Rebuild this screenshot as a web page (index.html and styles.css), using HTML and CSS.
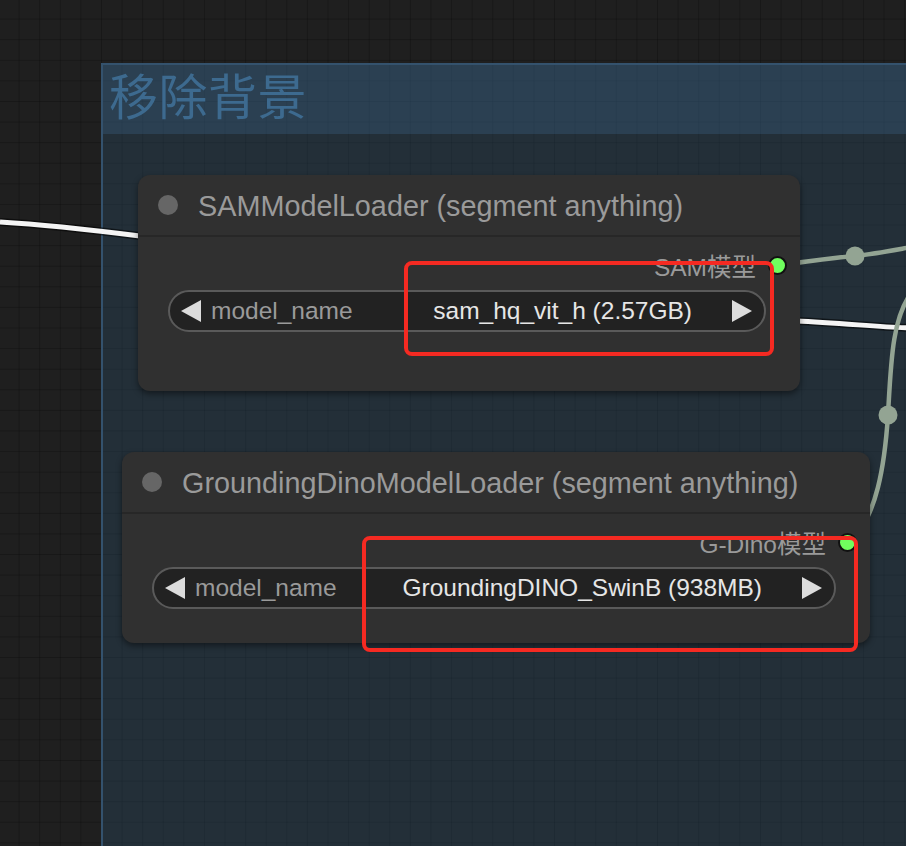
FILE: index.html
```html
<!DOCTYPE html>
<html lang="zh">
<head>
<meta charset="utf-8">
<title>ComfyUI - 移除背景</title>
<link rel="stylesheet" href="styles.css">
</head>
<body>
<div class="canvas">
  <div class="group">
    <div class="group-title">移除背景</div>
    <div class="group-body"></div>
  </div>

  <svg class="links" width="906" height="846" viewBox="0 0 906 846">
    <path class="link-shadow" d="M0 222 C 50 225, 100 231, 140 236"/>
    <path class="link-white" d="M0 222 C 50 225, 100 231, 140 236"/>
    <path class="link-shadow" d="M796 321 C 840 323, 880 327, 910 328"/>
    <path class="link-white" d="M796 321 C 840 323, 880 327, 910 328"/>
    <path class="link-sage" d="M779 265 C 805 262, 830 258, 855 256 C 875 254, 895 250, 912 247"/>
    <path class="link-sage" d="M846 546 C 878 520, 885 460, 888 415 C 891 362, 892 318, 912 292"/>
    <circle class="link-dot" cx="855" cy="256" r="9.5"/>
    <circle class="link-dot" cx="888" cy="415" r="9.5"/>
  </svg>

  <div class="node node-sam">
    <div class="node-header">
      <span class="node-dot"></span>
      <span class="node-title">SAMModelLoader (segment anything)</span>
    </div>
    <div class="node-body">
      <div class="output-row">
        <span class="output-label">SAM模型</span>
        <span class="slot"></span>
      </div>
      <div class="combo">
        <svg class="arrow" width="20" height="22" viewBox="0 0 20 22"><polygon points="20,0 20,22 0,11"/></svg>
        <span class="combo-label">model_name</span>
        <span class="combo-value">sam_hq_vit_h (2.57GB)</span>
        <svg class="arrow" width="20" height="22" viewBox="0 0 20 22"><polygon points="0,0 0,22 20,11"/></svg>
      </div>
    </div>
  </div>

  <div class="node node-dino">
    <div class="node-header">
      <span class="node-dot"></span>
      <span class="node-title">GroundingDinoModelLoader (segment anything)</span>
    </div>
    <div class="node-body">
      <div class="output-row">
        <span class="output-label">G-Dino模型</span>
        <span class="slot"></span>
      </div>
      <div class="combo">
        <svg class="arrow" width="20" height="22" viewBox="0 0 20 22"><polygon points="20,0 20,22 0,11"/></svg>
        <span class="combo-label">model_name</span>
        <span class="combo-value">GroundingDINO_SwinB (938MB)</span>
        <svg class="arrow" width="20" height="22" viewBox="0 0 20 22"><polygon points="0,0 0,22 20,11"/></svg>
      </div>
    </div>
  </div>

  <div class="mark mark-sam"></div>
  <div class="mark mark-dino"></div>
</div>
</body>
</html>
```

FILE: styles.css
```css
html, body {
  margin: 0;
  padding: 0;
  width: 906px;
  height: 846px;
  overflow: hidden;
}

body {
  font-family: "Liberation Sans", Arial, "Noto Sans CJK SC", sans-serif;
  background-color: #1f1f1f;
  background-image:
    linear-gradient(to right, rgba(0, 0, 0, 0.22) 1px, transparent 1px),
    linear-gradient(to bottom, rgba(0, 0, 0, 0.22) 1px, transparent 1px);
  background-size: 20.6px 20.6px;
  background-position: -2px -2px;
}

.canvas {
  position: relative;
  width: 906px;
  height: 846px;
}

/* group frame */
.group {
  position: absolute;
  left: 101px;
  top: 63px;
  width: 840px;
  height: 820px;
  display: flex;
  flex-direction: column;
  border-left: 2px solid #34526d;
  border-top: 2px solid #34526d;
}

.group-title {
  height: 69px;
  flex: none;
  background: rgba(56, 100, 138, 0.48);
  color: #3d6a8f;
  font-family: "Noto Sans CJK SC", "Liberation Sans", sans-serif;
  font-size: 49px;
  line-height: 58px;
  padding-left: 6px;
  letter-spacing: 0.5px;
}

.group-body {
  flex: 1;
  background: rgba(47, 87, 117, 0.3);
}

/* links */
.links {
  position: absolute;
  left: 0;
  top: 0;
  overflow: visible;
}

.link-shadow {
  fill: none;
  stroke: rgba(0, 0, 0, 0.55);
  stroke-width: 8;
}

.link-white {
  fill: none;
  stroke: #f4f4f4;
  stroke-width: 5;
}

.link-sage {
  fill: none;
  stroke: #93a493;
  stroke-width: 4.5;
}

.link-dot {
  fill: #93a493;
}

/* nodes */
.node {
  position: absolute;
  background: #303030;
  border-radius: 12px;
  box-shadow: 0 3px 6px rgba(0, 0, 0, 0.45);
  display: flex;
  flex-direction: column;
}

.node-sam {
  left: 138px;
  top: 175px;
  width: 662px;
  height: 216px;
}

.node-dino {
  left: 122px;
  top: 452px;
  width: 748px;
  height: 191px;
}

.node-header {
  height: 60px;
  flex: none;
  display: flex;
  align-items: center;
  gap: 20px;
  padding-left: 20px;
  border-bottom: 2px solid #272727;
}

.node-dot {
  width: 20px;
  height: 20px;
  border-radius: 50%;
  background: #666;
  flex: none;
}

.node-title {
  color: #9a9a9a;
  font-size: 28.8px;
  white-space: nowrap;
  position: relative;
  top: 1px;
}

.node-body {
  display: flex;
  flex-direction: column;
  padding: 16px 13px 0 30px;
}

.output-row {
  display: flex;
  justify-content: flex-end;
  align-items: center;
  gap: 12px;
  height: 24px;
}

.output-label {
  color: #9a9a9a;
  font-size: 24.5px;
  white-space: nowrap;
  font-family: "Liberation Sans", Arial, "Noto Sans CJK SC", sans-serif;
}

.slot {
  width: 15px;
  height: 15px;
  border-radius: 50%;
  background: #70ff5e;
  border: 2px solid #111;
  flex: none;
}

.combo {
  margin-top: 13px;
  margin-right: 21px;
  height: 42px;
  box-sizing: border-box;
  border: 2px solid #5a5a5a;
  border-radius: 21px;
  background: #222222;
  display: flex;
  align-items: center;
  padding: 0 12px 0 11px;
}

.arrow {
  flex: none;
}

.arrow polygon {
  fill: #dcdcdc;
}

.combo-label {
  color: #9a9a9a;
  font-size: 24.5px;
  margin-left: 10px;
  white-space: nowrap;
}

.combo-value {
  flex: 1;
  text-align: right;
  color: #e6e6e6;
  font-size: 24.5px;
  white-space: nowrap;
  margin-right: 40px;
}

/* red annotation boxes */
.mark {
  position: absolute;
  border: 4px solid #f52a22;
  border-radius: 8px;
  box-sizing: border-box;
}

.mark-sam {
  left: 404px;
  top: 261px;
  width: 370px;
  height: 95px;
}

.mark-dino {
  left: 362px;
  top: 536px;
  width: 496px;
  height: 116px;
}
```
